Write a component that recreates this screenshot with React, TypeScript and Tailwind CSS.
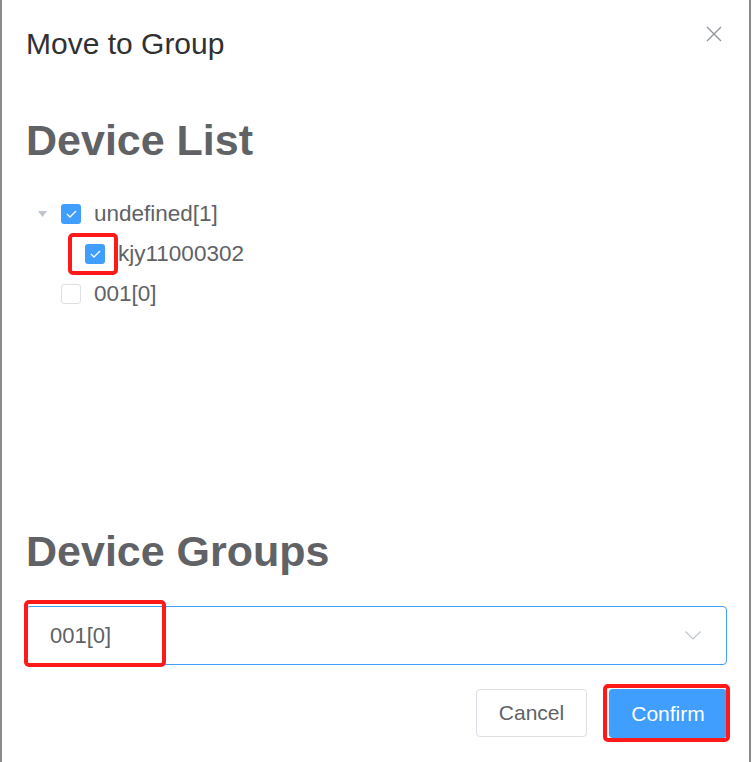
function Box({ checked }: { checked: boolean }) {
  return checked ? (
    <span className="flex h-5 w-5 shrink-0 items-center justify-center rounded-[3px] bg-[#409eff]">
      <svg width="11" height="8" viewBox="0 0 11 8">
        <path d="M1 4 L4 7 L10 1" fill="none" stroke="#fff" strokeWidth="1.3" />
      </svg>
    </span>
  ) : (
    <span className="block h-5 w-5 shrink-0 rounded-[3px] border border-[#dcdfe6] bg-white" />
  )
}

function Row({
  label,
  checked,
  level,
  expanded,
  marked,
}: {
  label: string
  checked: boolean
  level: number
  expanded?: boolean
  marked?: boolean
}) {
  return (
    <div className="flex h-10 items-center" style={{ paddingLeft: level * 24 }}>
      <span className="flex w-[35px] shrink-0 items-center pl-[12px]">
        {expanded && (
          <svg width="9" height="6" viewBox="0 0 9 6">
            <path d="M0 0 L9 0 L4.5 6 Z" fill="#c0c4cc" />
          </svg>
        )}
      </span>
      <span className="relative">
        <Box checked={checked} />
        {marked && (
          <span className="absolute -left-[17px] -top-[11px] h-[42px] w-[50px] rounded-[5px] border-[4px] border-[#ff1a1a]" />
        )}
      </span>
      <span className="ml-[13px] text-[22.5px] text-[#606266]">{label}</span>
    </div>
  )
}

export default function App() {
  return (
    <div
      className="h-[762px] w-[751px] border-x-2 border-[#8a8a8a] bg-white"
      style={{ fontFamily: '"Liberation Sans", Arial, sans-serif' }}
    >
      <div className="flex items-start justify-between pl-[24px] pr-[27px] pt-[25px]">
        <h1 className="text-[30px] leading-[37px] text-[#303133]">Move to Group</h1>
        <svg width="16" height="16" viewBox="0 0 16 16" className="mt-[1px]">
          <path d="M1 1 L15 15 M15 1 L1 15" stroke="#909399" strokeWidth="1.3" />
        </svg>
      </div>

      <div className="pl-[24px] pr-[22px]">
        <h2 className="mt-[52px] text-[43px] font-bold leading-[52px] text-[#606266]">Device List</h2>

        <div className="mt-[28px] h-[331px]">
          <Row label="undefined[1]" checked level={0} expanded />
          <Row label="kjy11000302" checked level={1} marked />
          <Row label="001[0]" checked={false} level={0} />
        </div>

        <h2 className="text-[43px] font-bold leading-[52px] text-[#606266]">Device Groups</h2>

        <div className="relative mt-[29px] flex h-[59px] items-center justify-between rounded-[4px] border border-[#409eff] pl-[23px] pr-[25px]">
          <span className="text-[22px] text-[#606266]">001[0]</span>
          <svg width="16" height="9" viewBox="0 0 16 9">
            <path d="M0.5 0.5 L8 8 L15.5 0.5" fill="none" stroke="#c0c4cc" strokeWidth="1.2" />
          </svg>
          <span className="absolute -left-[3px] -top-[7px] h-[67px] w-[142px] rounded-[5px] border-[4px] border-[#ff1a1a]" />
        </div>

        <div className="mt-[24px] flex justify-end gap-[22px]">
          <button className="h-[48px] w-[111px] rounded-[4px] border border-[#dcdfe6] bg-white text-[21px] text-[#606266]">
            Cancel
          </button>
          <span className="relative">
            <button className="h-[49px] w-[118px] rounded-[4px] bg-[#409eff] text-[21px] text-white">
              Confirm
            </button>
            <span className="absolute -left-[6px] -top-[5px] h-[58px] w-[127px] rounded-[5px] border-[4px] border-[#ff1a1a]" />
          </span>
        </div>
      </div>
    </div>
  )
}
